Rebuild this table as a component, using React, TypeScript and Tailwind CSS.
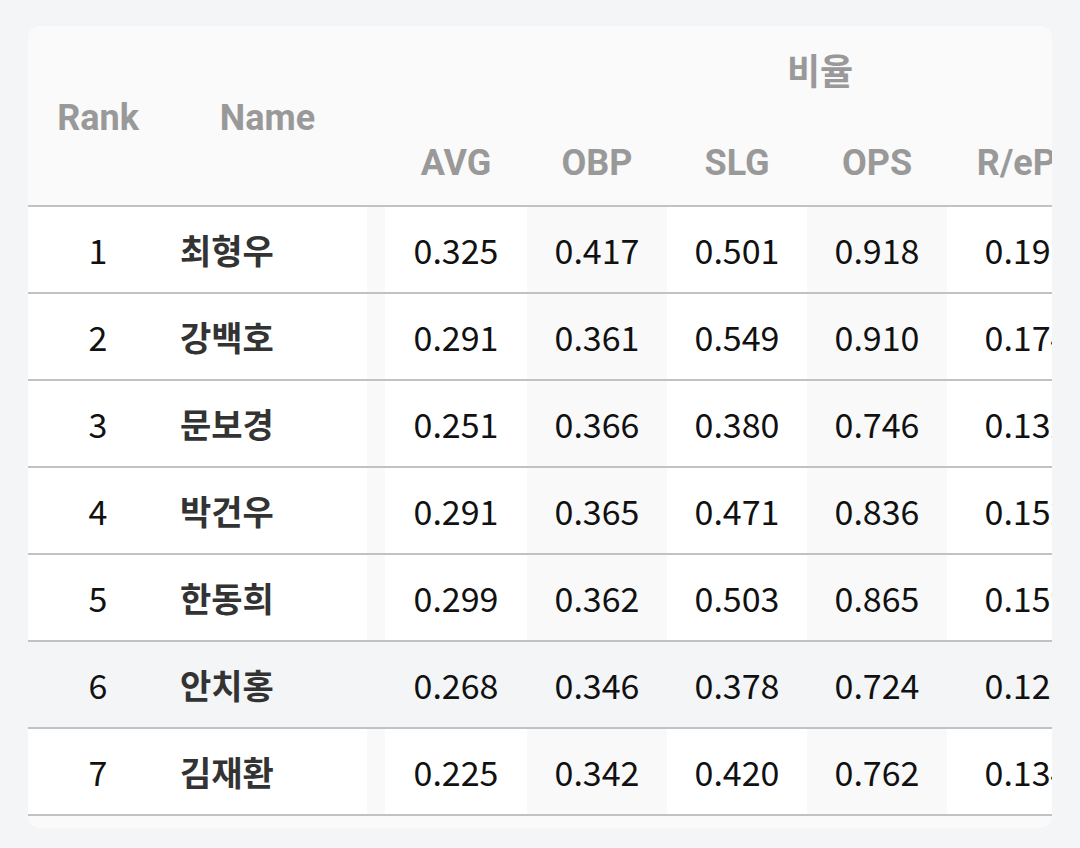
import React from 'react';

type Row = {
  rank: number;
  name: string;
  avg: string;
  obp: string;
  slg: string;
  ops: string;
  rep: string;
  iso: string;
};

const ROWS: Row[] = [
  { rank: 1, name: '최형우', avg: '0.325', obp: '0.417', slg: '0.501', ops: '0.918', rep: '0.196', iso: '0.176' },
  { rank: 2, name: '강백호', avg: '0.291', obp: '0.361', slg: '0.549', ops: '0.910', rep: '0.174', iso: '0.258' },
  { rank: 3, name: '문보경', avg: '0.251', obp: '0.366', slg: '0.380', ops: '0.746', rep: '0.132', iso: '0.129' },
  { rank: 4, name: '박건우', avg: '0.291', obp: '0.365', slg: '0.471', ops: '0.836', rep: '0.152', iso: '0.180' },
  { rank: 5, name: '한동희', avg: '0.299', obp: '0.362', slg: '0.503', ops: '0.865', rep: '0.159', iso: '0.204' },
  { rank: 6, name: '안치홍', avg: '0.268', obp: '0.346', slg: '0.378', ops: '0.724', rep: '0.126', iso: '0.110' },
  { rank: 7, name: '김재환', avg: '0.225', obp: '0.342', slg: '0.420', ops: '0.762', rep: '0.134', iso: '0.195' },
];

const HEAD = "font-['Roboto','Noto_Sans_CJK_KR',sans-serif] font-bold text-[36px] text-[#999]";
const BODY = "font-['Noto_Sans_CJK_KR','Noto_Sans',sans-serif]";
const LINE = 'border-b-2 border-[#c2c2c2]';

export default function App() {
  return (
    <div className="min-h-[848px] w-[1080px] bg-[#f4f5f7] pt-[26px] px-[28px]">
      <div className="rounded-xl bg-[#fafafa] overflow-hidden pb-3">
        <table className="table-fixed border-separate border-spacing-0 w-[1227px]">
          <colgroup>
            <col className="w-[140px]" />
            <col className="w-[199px]" />
            <col className="w-[18px]" />
            <col className="w-[142px]" />
            <col className="w-[140px]" />
            <col className="w-[140px]" />
            <col className="w-[140px]" />
            <col className="w-[160px]" />
            <col className="w-[148px]" />
          </colgroup>
          <thead>
            <tr className="h-[91px]">
              <th rowSpan={2} className={`${HEAD} text-center pt-[5px] ${LINE}`}>Rank</th>
              <th rowSpan={2} className={`${HEAD} text-center pt-[5px] ${LINE}`}>Name</th>
              <th rowSpan={2} className={LINE} />
              <th colSpan={6} className={`${HEAD} text-center pt-[2px]`}>비율</th>
            </tr>
            <tr className="h-[90px]">
              {['AVG', 'OBP', 'SLG', 'OPS', 'R/ePA', 'ISO'].map((h) => (
                <th key={h} className={`${HEAD} text-center whitespace-nowrap pt-[3px] ${LINE}`}>
                  {h}
                </th>
              ))}
            </tr>
          </thead>
          <tbody>
            {ROWS.map((r) => {
              // 6th row is the highlighted one
              const hl = r.rank === 6;
              const plain = hl ? 'bg-[#f4f5f7]' : 'bg-white';
              const shade = hl ? 'bg-[#f4f5f7]' : 'bg-[#f9f9f9]';
              const cell = `${BODY} h-[87px] text-center text-[34px] text-[#111] ${LINE}`;
              return (
                <tr key={r.rank}>
                  <td className={`${cell} ${plain}`}>{r.rank}</td>
                  <td className={`${cell} ${plain} !text-left pl-3 font-bold !text-[#333]`}>{r.name}</td>
                  <td className={`${cell} ${shade}`} />
                  <td className={`${cell} ${plain}`}>{r.avg}</td>
                  <td className={`${cell} ${shade}`}>{r.obp}</td>
                  <td className={`${cell} ${plain}`}>{r.slg}</td>
                  <td className={`${cell} ${shade}`}>{r.ops}</td>
                  <td className={`${cell} ${plain}`}>{r.rep}</td>
                  <td className={`${cell} ${shade}`}>{r.iso}</td>
                </tr>
              );
            })}
          </tbody>
        </table>
      </div>
    </div>
  );
}
